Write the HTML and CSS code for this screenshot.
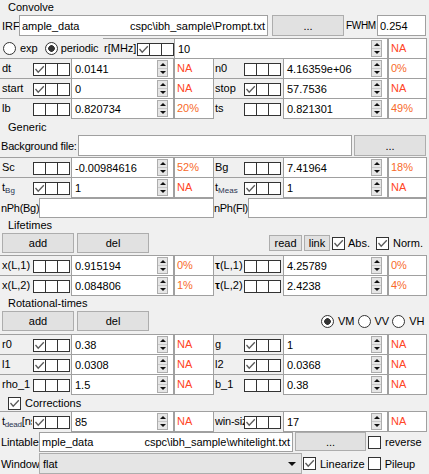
FILE: index.html
```html
<!DOCTYPE html>
<html>
<head>
<meta charset="utf-8">
<title>Convolve</title>
<link rel="stylesheet" href="styles.css">
</head>
<body>
<div class="app">
  <div class="title">Convolve</div>

  <div class="line l-irf">
    <span class="lab lab-irf">IRF</span>
    <span class="field f-path f-irf"><span>ample_data</span><span>cspc\ibh_sample\Prompt.txt</span></span>
    <span class="btn b-irf">...</span>
    <span class="lab lab-fwhm">FWHM</span>
    <span class="field f-fwhm">0.254</span>
  </div>

  <div class="line l-rad">
    <span class="radio r-exp"></span><span class="rt">exp</span>
    <span class="radio on r-per"></span><span class="rt">periodic</span>
    <div class="p p-rep">
      <span class="pl">r[MHz]</span>
      <span class="ck"><i class="on"><svg viewBox="0 0 11 11"><path d="M1.5 5 L4.2 8.2 L9.8 2.2"/></svg></i><i></i><i></i></span>
      <span class="sp"><span class="v">10</span><span class="sb"><b class="up"></b><b class="dn"></b></span></span>
      <span class="na">NA</span>
    </div>
  </div>

  <div class="grid g-conv">
    <div class="p pL"><span class="pl">dt</span><span class="ck"><i class="on"><svg viewBox="0 0 11 11"><path d="M1.5 5 L4.2 8.2 L9.8 2.2"/></svg></i><i></i><i></i></span><span class="sp"><span class="v">0.0141</span><span class="sb"><b class="up"></b><b class="dn"></b></span></span><span class="na">NA</span></div>
    <div class="p pR"><span class="pl">n0</span><span class="ck"><i></i><i></i><i></i></span><span class="sp"><span class="v">4.16359e+06</span><span class="sb"><b class="up"></b><b class="dn"></b></span></span><span class="na pc">0%</span></div>

    <div class="p pL"><span class="pl">start</span><span class="ck"><i class="on"><svg viewBox="0 0 11 11"><path d="M1.5 5 L4.2 8.2 L9.8 2.2"/></svg></i><i></i><i></i></span><span class="sp"><span class="v">0</span><span class="sb"><b class="up"></b><b class="dn"></b></span></span><span class="na">NA</span></div>
    <div class="p pR"><span class="pl">stop</span><span class="ck"><i class="on"><svg viewBox="0 0 11 11"><path d="M1.5 5 L4.2 8.2 L9.8 2.2"/></svg></i><i></i><i></i></span><span class="sp"><span class="v">57.7536</span><span class="sb"><b class="up"></b><b class="dn"></b></span></span><span class="na">NA</span></div>

    <div class="p pL"><span class="pl">lb</span><span class="ck"><i></i><i></i><i></i></span><span class="sp"><span class="v">0.820734</span><span class="sb"><b class="up"></b><b class="dn"></b></span></span><span class="na pc">20%</span></div>
    <div class="p pR"><span class="pl">ts</span><span class="ck"><i></i><i></i><i></i></span><span class="sp"><span class="v">0.821301</span><span class="sb"><b class="up"></b><b class="dn"></b></span></span><span class="na pc">49%</span></div>
  </div>

  <div class="title t-gen">Generic</div>

  <div class="line l-bg">
    <span class="lab lab-bg">Background file:</span>
    <span class="field f-bg"></span>
    <span class="btn b-bg">...</span>
  </div>

  <div class="grid g-gen">
    <div class="p pL"><span class="pl">Sc</span><span class="ck"><i></i><i></i><i></i></span><span class="sp"><span class="v">-0.00984616</span><span class="sb"><b class="up"></b><b class="dn"></b></span></span><span class="na pc">52%</span></div>
    <div class="p pR"><span class="pl">Bg</span><span class="ck"><i></i><i></i><i></i></span><span class="sp"><span class="v">7.41964</span><span class="sb"><b class="up"></b><b class="dn"></b></span></span><span class="na pc">18%</span></div>

    <div class="p pL"><span class="pl">t<sub>Bg</sub></span><span class="ck"><i class="on"><svg viewBox="0 0 11 11"><path d="M1.5 5 L4.2 8.2 L9.8 2.2"/></svg></i><i></i><i></i></span><span class="sp"><span class="v">1</span><span class="sb"><b class="up"></b><b class="dn"></b></span></span><span class="na">NA</span></div>
    <div class="p pR"><span class="pl">t<sub>Meas</sub></span><span class="ck"><i class="on"><svg viewBox="0 0 11 11"><path d="M1.5 5 L4.2 8.2 L9.8 2.2"/></svg></i><i></i><i></i></span><span class="sp"><span class="v">1</span><span class="sb"><b class="up"></b><b class="dn"></b></span></span><span class="na">NA</span></div>
  </div>

  <div class="line l-nph">
    <span class="lab lab-nphb">nPh(Bg)</span>
    <span class="field f-nphb"></span>
    <span class="lab lab-nphf">nPh(Fl)</span>
    <span class="field f-nphf"></span>
  </div>

  <div class="title">Lifetimes</div>

  <div class="line l-btns">
    <span class="btn b-add">add</span>
    <span class="btn b-del">del</span>
    <span class="btn b-read">read</span>
    <span class="btn b-link">link</span>
    <span class="cb on cb-abs"><svg viewBox="0 0 11 11"><path d="M1.5 5 L4.2 8.2 L9.8 2.2"/></svg></span><span class="ct">Abs.</span>
    <span class="cb on cb-norm"><svg viewBox="0 0 11 11"><path d="M1.5 5 L4.2 8.2 L9.8 2.2"/></svg></span><span class="ct">Norm.</span>
  </div>

  <div class="grid g-life">
    <div class="p pL"><span class="pl">x(L,1)</span><span class="ck"><i></i><i></i><i></i></span><span class="sp"><span class="v">0.915194</span><span class="sb"><b class="up"></b><b class="dn"></b></span></span><span class="na pc">0%</span></div>
    <div class="p pR"><span class="pl"><b class="tau">τ</b>(L,1)</span><span class="ck"><i></i><i></i><i></i></span><span class="sp"><span class="v">4.25789</span><span class="sb"><b class="up"></b><b class="dn"></b></span></span><span class="na pc">0%</span></div>

    <div class="p pL"><span class="pl">x(L,2)</span><span class="ck"><i></i><i></i><i></i></span><span class="sp"><span class="v">0.084806</span><span class="sb"><b class="up"></b><b class="dn"></b></span></span><span class="na pc">1%</span></div>
    <div class="p pR"><span class="pl"><b class="tau">τ</b>(L,2)</span><span class="ck"><i></i><i></i><i></i></span><span class="sp"><span class="v">2.4238</span><span class="sb"><b class="up"></b><b class="dn"></b></span></span><span class="na pc">4%</span></div>
  </div>

  <div class="title t-rot">Rotational-times</div>

  <div class="line l-btns">
    <span class="btn b-add">add</span>
    <span class="btn b-del">del</span>
    <span class="radio on r-vm"></span><span class="rt">VM</span>
    <span class="radio r-vv"></span><span class="rt">VV</span>
    <span class="radio r-vh"></span><span class="rt">VH</span>
  </div>

  <div class="grid g-rot">
    <div class="p pL"><span class="pl">r0</span><span class="ck"><i class="on"><svg viewBox="0 0 11 11"><path d="M1.5 5 L4.2 8.2 L9.8 2.2"/></svg></i><i></i><i></i></span><span class="sp"><span class="v">0.38</span><span class="sb"><b class="up"></b><b class="dn"></b></span></span><span class="na">NA</span></div>
    <div class="p pR"><span class="pl">g</span><span class="ck"><i class="on"><svg viewBox="0 0 11 11"><path d="M1.5 5 L4.2 8.2 L9.8 2.2"/></svg></i><i></i><i></i></span><span class="sp"><span class="v">1</span><span class="sb"><b class="up"></b><b class="dn"></b></span></span><span class="na">NA</span></div>

    <div class="p pL"><span class="pl">l1</span><span class="ck"><i class="on"><svg viewBox="0 0 11 11"><path d="M1.5 5 L4.2 8.2 L9.8 2.2"/></svg></i><i></i><i></i></span><span class="sp"><span class="v">0.0308</span><span class="sb"><b class="up"></b><b class="dn"></b></span></span><span class="na">NA</span></div>
    <div class="p pR"><span class="pl">l2</span><span class="ck"><i class="on"><svg viewBox="0 0 11 11"><path d="M1.5 5 L4.2 8.2 L9.8 2.2"/></svg></i><i></i><i></i></span><span class="sp"><span class="v">0.0368</span><span class="sb"><b class="up"></b><b class="dn"></b></span></span><span class="na">NA</span></div>

    <div class="p pL"><span class="pl">rho_1</span><span class="ck"><i></i><i></i><i></i></span><span class="sp"><span class="v">1.5</span><span class="sb"><b class="up"></b><b class="dn"></b></span></span><span class="na">NA</span></div>
    <div class="p pR"><span class="pl">b_1</span><span class="ck"><i></i><i></i><i></i></span><span class="sp"><span class="v">0.38</span><span class="sb"><b class="up"></b><b class="dn"></b></span></span><span class="na">NA</span></div>
  </div>

  <div class="line l-corr">
    <span class="cb on cb-corr"><svg viewBox="0 0 11 11"><path d="M1.5 5 L4.2 8.2 L9.8 2.2"/></svg></span><span class="ct">Corrections</span>
  </div>

  <div class="grid g-corr">
    <div class="p pL"><span class="pl pl-tight">t<sub>dead</sub>[ns]</span><span class="ck"><i class="on"><svg viewBox="0 0 11 11"><path d="M1.5 5 L4.2 8.2 L9.8 2.2"/></svg></i><i></i><i></i></span><span class="sp"><span class="v">85</span><span class="sb"><b class="up"></b><b class="dn"></b></span></span><span class="na">NA</span></div>
    <div class="p pR"><span class="pl pl-tight">win-size</span><span class="ck"><i class="on"><svg viewBox="0 0 11 11"><path d="M1.5 5 L4.2 8.2 L9.8 2.2"/></svg></i><i></i><i></i></span><span class="sp"><span class="v">17</span><span class="sb"><b class="up"></b><b class="dn"></b></span></span><span class="na">NA</span></div>
  </div>

  <div class="line l-lin">
    <span class="lab lab-lin">Lintable</span>
    <span class="field f-path f-lin"><span>mple_data</span><span>cspc\ibh_sample\whitelight.txt</span></span>
    <span class="btn b-lin">...</span>
    <span class="cb cb-rev"></span><span class="ct">reverse</span>
  </div>

  <div class="line l-win">
    <span class="lab lab-win">Window</span>
    <span class="combo"><span class="cv">flat</span><span class="arrow"></span></span>
    <span class="cb on cb-linz"><svg viewBox="0 0 11 11"><path d="M1.5 5 L4.2 8.2 L9.8 2.2"/></svg></span><span class="ct">Linearize</span>
    <span class="cb cb-pile"></span><span class="ct">Pileup</span>
  </div>
</div>
</body>
</html>
```

FILE: styles.css
```css
* { box-sizing: border-box; }
html, body { margin: 0; padding: 0; }
body {
  background: #f0f0f0;
  font-family: "Liberation Sans", Arial, sans-serif;
  font-size: 11px;
  color: #000;
  width: 429px;
  height: 474px;
  overflow: hidden;
}
.app { width: 429px; }

.title { height: 15px; line-height: 15px; padding-left: 8px; white-space: nowrap; }
.t-gen { margin-top: 1px; height: 16px; line-height: 16px; }
.t-rot { margin-top: 1px; }

.line { display: flex; align-items: center; white-space: nowrap; }
.lab { flex: none; white-space: nowrap; }

.field {
  flex: none;
  background: #fff;
  border: 1px solid #a0a0a0;
  display: flex;
  align-items: center;
  padding: 0 2px;
  overflow: hidden;
  white-space: nowrap;
}
.f-path { justify-content: space-between; }

.btn {
  flex: none;
  background: #e1e1e1;
  border: 1px solid #adadad;
  display: flex;
  align-items: center;
  justify-content: center;
}

/* IRF row */
.l-irf { height: 21px; }
.lab-irf { width: 19px; padding-left: 2px; }
.f-irf { width: 249px; height: 21px; }
.b-irf { margin-left: 4px; width: 72px; height: 21px; }
.lab-fwhm { margin-left: 2px; width: 31px; font-size: 10px; letter-spacing: -0.3px; }
.f-fwhm { width: 49px; height: 21px; }

/* radios */
.radio {
  flex: none;
  width: 13px;
  height: 13px;
  border: 1px solid #333;
  border-radius: 50%;
  background: #fff;
}
.radio.on { background: radial-gradient(circle, #333 0, #333 3px, #fff 3.6px); }
.rt { margin-left: 4px; }
.l-rad { margin-top: 2px; height: 20px; width: 427px; }
.r-exp { margin-left: 3px; }
.r-per { margin-left: 7px; }
.r-per + .rt { margin-left: 3px; letter-spacing: -0.1px; }
.p-rep { margin-left: auto; align-self: flex-start; width: 324px; }
.p-rep .pl { width: 34px; padding-left: 1px; }
.p-rep .ck { width: 37px; padding-left: 0; }
.p-rep .sp { width: 214px; }
.p-rep .na { width: 39px; }

/* parameter grid */
.grid { display: grid; grid-template-columns: 214px 213px; grid-auto-rows: 20px; }
.g-gen { margin-top: 1px; }
.g-life { margin-top: 2px; }
.g-rot { margin-top: 3px; }

.p { display: flex; height: 21px; }
.pl {
  flex: none;
  border-top: 1px solid #a0a0a0;
  padding-left: 2px;
  line-height: 19px;
  white-space: nowrap;
  overflow: hidden;
}
.pL .pl { width: 32px; }
.pR .pl { width: 30px; padding-left: 1px; }
.pl-tight { letter-spacing: -0.2px; }
.pl sub { font-size: 8px; vertical-align: -2px; line-height: 0; color: #2a3550; }
.tau { font-weight: bold; }

.ck {
  flex: none;
  width: 39px;
  border-top: 1px solid #a0a0a0;
  display: flex;
  align-items: center;
  padding-left: 1px;
}
.pR .ck { padding-left: 0; }
.ck i {
  width: 13px;
  height: 13px;
  border: 1px solid #333;
  background: #fff;
  display: flex;
  align-items: center;
  justify-content: center;
}
.ck i + i { margin-left: -1px; }

svg { display: block; width: 11px; height: 11px; }
svg path { fill: none; stroke: #5a5a5a; stroke-width: 1.3; }

.sp {
  flex: none;
  background: #fff;
  border: 1px solid #a0a0a0;
  height: 21px;
  display: flex;
  align-items: center;
}
.pL .sp { width: 103px; }
.pR .sp { width: 105px; }
.v { flex: 1; padding-left: 3px; white-space: nowrap; overflow: hidden; }
.sb {
  flex: none;
  width: 11px;
  height: 17px;
  margin-right: 5px;
  border: 1px solid #adadad;
  background: linear-gradient(#e6e6e6 0, #e6e6e6 7px, #c8c8c8 7px, #c8c8c8 8px, #e6e6e6 8px);
  display: flex;
  flex-direction: column;
  align-items: center;
  justify-content: space-around;
}
.sb b { width: 0; height: 0; border-left: 3px solid transparent; border-right: 3px solid transparent; }
.sb .up { border-bottom: 3px solid #111; }
.sb .dn { border-top: 3px solid #111; }

.na {
  flex: none;
  background: #fff;
  border: 1px solid #a0a0a0;
  height: 21px;
  padding-left: 2px;
  line-height: 19px;
  color: #ff4626;
}
.na.pc { color: #f76a2a; }
.pL .na { width: 40px; }
.pR .na { width: 39px; }

/* background file */
.l-bg { height: 21px; }
.lab-bg { width: 78px; padding-left: 1px; letter-spacing: -0.2px; }
.f-bg { width: 274px; height: 21px; }
.b-bg { margin-left: 2px; width: 72px; height: 21px; }

/* nPh */
.l-nph { margin-top: 1px; height: 20px; }
.lab-nphb { width: 39px; padding-left: 1px; letter-spacing: -0.3px; }
.f-nphb { width: 175px; height: 20px; }
.lab-nphf { width: 34px; letter-spacing: -0.3px; }
.f-nphf { width: 179px; height: 20px; }

/* button rows */
.l-btns { height: 20px; }
.b-add { margin-left: 2px; width: 72px; height: 20px; }
.b-del { margin-left: 3px; width: 72px; height: 20px; }
.b-read { margin-left: 120px; width: 33px; height: 16px; }
.b-link { margin-left: 2px; width: 26px; height: 16px; }

.cb {
  flex: none;
  width: 13px;
  height: 13px;
  border: 1px solid #333;
  background: #fff;
  display: flex;
  align-items: center;
  justify-content: center;
}
.ct { margin-left: 4px; }
.cb-abs { margin-left: 2px; }
.cb-abs + .ct { margin-left: 3px; }
.cb-norm { margin-left: 6px; }

.r-vm { margin-left: 172px; }
.r-vv, .r-vh { margin-left: 3px; }

/* corrections */
.l-corr { margin-top: 1px; height: 16px; }
.cb-corr { margin-left: 8px; }

/* lintable */
.l-lin { margin-top: 1px; height: 21px; align-items: flex-start; }
.lab-lin { width: 39px; padding-left: 1px; line-height: 20px; letter-spacing: -0.1px; }
.f-lin { width: 254px; height: 20px; }
.b-lin { margin-left: 2px; width: 71px; height: 19px; }
.cb-rev { margin-left: 2px; margin-top: 4px; }
.cb-rev + .ct { margin-left: 4px; line-height: 20px; }

/* window */
.l-win { height: 21px; }
.lab-win { width: 39px; padding-left: 1px; letter-spacing: -0.1px; }
.combo {
  flex: none;
  width: 263px;
  height: 21px;
  background: #e5e5e5;
  border: 1px solid #adadad;
  display: flex;
  align-items: center;
  padding-left: 3px;
}
.cv { flex: 1; }
.arrow {
  width: 0;
  height: 0;
  border-left: 4px solid transparent;
  border-right: 4px solid transparent;
  border-top: 4px solid #111;
  margin-right: 5px;
}
.cb-linz { margin-left: 1px; }
.cb-pile { margin-left: 3px; }
```
